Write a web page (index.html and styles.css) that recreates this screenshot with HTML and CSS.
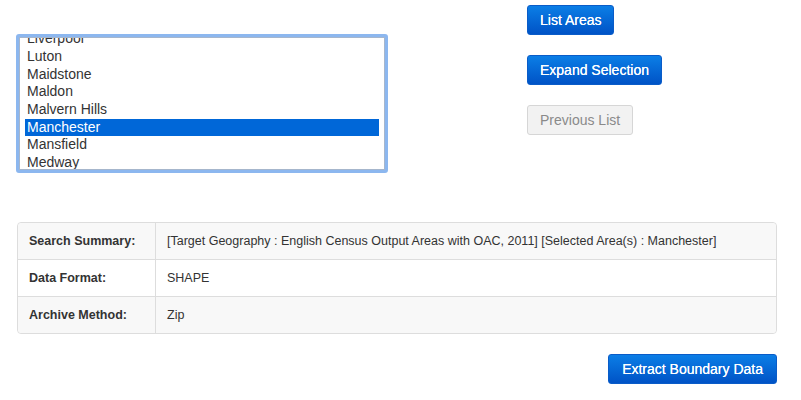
FILE: index.html
```html
<!DOCTYPE html>
<html>
<head>
<meta charset="utf-8">
<link rel="stylesheet" href="styles.css">
</head>
<body>
<div class="page">
  <div class="top">
    <div class="left">
      <div class="listbox">
        <div class="listbox-inner">
          <ul class="items">
            <li>Liverpool</li>
            <li>Luton</li>
            <li>Maidstone</li>
            <li>Maldon</li>
            <li>Malvern Hills</li>
            <li class="selected">Manchester</li>
            <li>Mansfield</li>
            <li>Medway</li>
          </ul>
        </div>
      </div>
    </div>
    <div class="actions">
      <button class="btn btn-primary">List Areas</button>
      <button class="btn btn-primary">Expand Selection</button>
      <button class="btn btn-disabled" disabled>Previous List</button>
    </div>
  </div>

  <table class="summary">
    <tr class="odd">
      <th>Search Summary:</th>
      <td>[Target Geography : English Census Output Areas with OAC, 2011] [Selected Area(s) : Manchester]</td>
    </tr>
    <tr>
      <th>Data Format:</th>
      <td>SHAPE</td>
    </tr>
    <tr class="odd">
      <th>Archive Method:</th>
      <td>Zip</td>
    </tr>
  </table>

  <div class="footer">
    <button class="btn btn-primary btn-wide">Extract Boundary Data</button>
  </div>
</div>
</body>
</html>
```

FILE: styles.css
```css
* { box-sizing: border-box; }

html, body {
  margin: 0;
  padding: 0;
  background: #fff;
  font-family: "Liberation Sans", Arial, Helvetica, sans-serif;
  color: #333;
}

.page {
  padding: 5px 24px 0 17px;
}

.top {
  display: flex;
  align-items: flex-start;
}

.left {
  width: 510px;
  padding-top: 29px;
}

.listbox {
  margin-left: -1px;
  width: 372px;
  height: 139px;
  border: 3px solid #8cb7ef;
  border-radius: 3px;
}

.listbox-inner {
  height: 100%;
  border: 1px solid #a6b6cc;
  background: #fff;
  overflow: hidden;
  padding: 0 5px 0 5px;
}

.items {
  list-style: none;
  margin: -7.8px 0 0 0;
  padding: 0;
  font-size: 14px;
  line-height: 17.67px;
  color: #333;
}

.items li {
  padding-left: 2px;
  white-space: nowrap;
}

.items li.selected {
  background: #0067d8;
  color: #fff;
}

.actions {
  display: flex;
  flex-direction: column;
  align-items: flex-start;
  gap: 20px;
}

.btn {
  font-family: "Liberation Sans", Arial, Helvetica, sans-serif;
  font-size: 14px;
  line-height: 20px;
  padding: 4px 12px;
  height: 30px;
  border-radius: 3px;
  border: 1px solid transparent;
  cursor: pointer;
}

.btn-wide {
  padding: 4px 13px 4px 13px;
}

.btn-primary {
  color: #fff;
  background: linear-gradient(#0b7ee6, #0053c6);
  border-color: #0a5cc8;
  text-shadow: 0 0 0.4px #fff;
}

.btn-disabled {
  color: #8a8a8a;
  background: #f2f2f2;
  border-color: #d6d6d6;
  cursor: default;
}

.summary {
  margin-top: 49px;
  width: 760px;
  border-collapse: separate;
  border-spacing: 0;
  border: 1px solid #dddddd;
  border-radius: 4px;
  font-size: 12.5px;
  color: #333;
}

.summary th,
.summary td {
  text-align: left;
  padding: 8px 12px 8px 11px;
  line-height: 20px;
  height: 37px;
  vertical-align: middle;
  border-top: 1px solid #dddddd;
}

.summary tr:first-child th,
.summary tr:first-child td {
  border-top: none;
  height: 36px;
}

.summary th {
  width: 138px;
  font-weight: bold;
  border-right: 1px solid #dddddd;
}

.summary tr.odd th,
.summary tr.odd td {
  background: #f8f8f8;
}

.summary tr:first-child th { border-top-left-radius: 4px; }
.summary tr:first-child td { border-top-right-radius: 4px; }
.summary tr:last-child th { border-bottom-left-radius: 4px; }
.summary tr:last-child td { border-bottom-right-radius: 4px; }

.footer {
  display: flex;
  justify-content: flex-end;
  width: 760px;
  margin-top: 20px;
}
```
